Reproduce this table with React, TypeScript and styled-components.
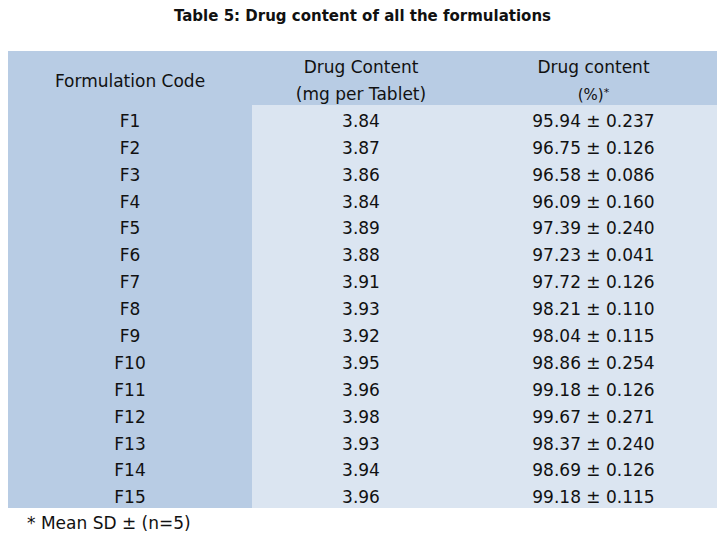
import styled, { createGlobalStyle } from 'styled-components'

const GlobalStyle = createGlobalStyle`
  body {
    margin: 0;
    background: #fff;
    font-family: "DejaVu Sans", "Liberation Sans", sans-serif;
    color: #111;
  }
`

const Page = styled.div`
  width: 726px;
  min-height: 534px;
  padding: 0 9px 0 8px;
  box-sizing: border-box;
  display: flex;
  flex-direction: column;

  & > * {
    flex-shrink: 0;
  }
`

const Title = styled.h1`
  margin: 0;
  height: 51px;
  padding-top: 5px;
  box-sizing: border-box;
  text-align: center;
  font-size: 15px;
  font-weight: bold;
  line-height: 22px;
  color: #111;
`

const Table = styled.table`
  width: 709px;
  border-collapse: collapse;
  table-layout: fixed;
  font-size: 17px;
`

const HeadCell = styled.th<{ $span?: boolean }>`
  background: #b8cce4;
  font-weight: normal;
  text-align: center;
  box-sizing: border-box;
  height: 26.9px;
  padding: 7px 0 0;
  line-height: 19px;
  vertical-align: ${({ $span }) => ($span ? 'middle' : 'top')};
  white-space: nowrap;
`

const Percent = styled.span`
  font-size: 15px;
`

const Sup = styled.sup`
  font-size: 11px;
  vertical-align: 4px;
  line-height: 0;
`

const Cell = styled.td<{ $code?: boolean }>`
  background: ${({ $code }) => ($code ? '#b8cce4' : '#dbe5f1')};
  text-align: center;
  box-sizing: border-box;
  height: 26.9px;
  padding: 7px 0 0;
  line-height: 19px;
  vertical-align: top;
  white-space: nowrap;
`

const Footnote = styled.p`
  margin: 0;
  padding: 6px 0 0 19px;
  font-size: 17px;
  line-height: 19px;
`

const rows: [string, string, string][] = [
  ['F1', '3.84', '95.94 ± 0.237'],
  ['F2', '3.87', '96.75 ± 0.126'],
  ['F3', '3.86', '96.58 ± 0.086'],
  ['F4', '3.84', '96.09 ± 0.160'],
  ['F5', '3.89', '97.39 ± 0.240'],
  ['F6', '3.88', '97.23 ± 0.041'],
  ['F7', '3.91', '97.72 ± 0.126'],
  ['F8', '3.93', '98.21 ± 0.110'],
  ['F9', '3.92', '98.04 ± 0.115'],
  ['F10', '3.95', '98.86 ± 0.254'],
  ['F11', '3.96', '99.18 ± 0.126'],
  ['F12', '3.98', '99.67 ± 0.271'],
  ['F13', '3.93', '98.37 ± 0.240'],
  ['F14', '3.94', '98.69 ± 0.126'],
  ['F15', '3.96', '99.18 ± 0.115'],
]

const App = () => {
  return (
    <>
      <GlobalStyle />
      <Page>
        <Title>Table 5: Drug content of all the formulations</Title>
        <Table>
          <colgroup>
            <col style={{ width: 244 }} />
            <col style={{ width: 218 }} />
            <col style={{ width: 247 }} />
          </colgroup>
          <thead>
            <tr>
              <HeadCell rowSpan={2} $span>Formulation Code</HeadCell>
              <HeadCell>Drug Content</HeadCell>
              <HeadCell>Drug content</HeadCell>
            </tr>
            <tr>
              <HeadCell>(mg per Tablet)</HeadCell>
              <HeadCell>
                <Percent>(%)</Percent>
                <Sup>*</Sup>
              </HeadCell>
            </tr>
          </thead>
          <tbody>
            {rows.map(([code, mg, pct]) => (
              <tr key={code}>
                <Cell $code>{code}</Cell>
                <Cell>{mg}</Cell>
                <Cell>{pct}</Cell>
              </tr>
            ))}
          </tbody>
        </Table>
        <Footnote>* Mean SD ± (n=5)</Footnote>
      </Page>
    </>
  )
}

export default App
